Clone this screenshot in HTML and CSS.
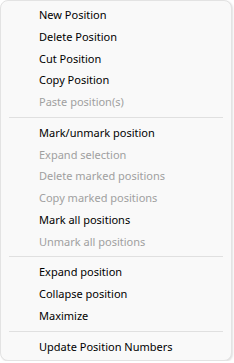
FILE: index.html
```html
<!DOCTYPE html>
<html lang="en">
<head>
    <meta charset="UTF-8">
    <title>Position menu</title>
    <link rel="stylesheet" href="styles.css">
</head>
<body>
    <div class="menu">
        <div class="item">New Position</div>
        <div class="item">Delete Position</div>
        <div class="item">Cut Position</div>
        <div class="item">Copy Position</div>
        <div class="item disabled">Paste position(s)</div>
        <div class="sep"></div>
        <div class="item">Mark/unmark position</div>
        <div class="item disabled">Expand selection</div>
        <div class="item disabled">Delete marked positions</div>
        <div class="item disabled">Copy marked positions</div>
        <div class="item">Mark all positions</div>
        <div class="item disabled">Unmark all positions</div>
        <div class="sep"></div>
        <div class="item">Expand position</div>
        <div class="item">Collapse position</div>
        <div class="item">Maximize</div>
        <div class="sep"></div>
        <div class="item">Update Position Numbers</div>
    </div>
</body>
</html>
```

FILE: styles.css
```css
body {
    margin: 0;
    background: #fff;
    font-family: 'Noto Sans', sans-serif;
    font-size: 11px;
}
.menu {
    box-sizing: border-box;
    width: 232px;
    height: 361px;
    padding-top: 3px;
    background-color: #f9f9f9;
    border: 1px solid #e3e3e3;
    border-radius: 8px;
    box-shadow: 1px 1px 2px rgba(0, 0, 0, 0.12);
}
.item {
    height: 21.75px;
    line-height: 21.75px;
    padding-left: 38px;
    color: #000;
    white-space: nowrap;
}
.item.disabled {
    color: #a0a0a0;
}
.sep {
    height: 1px;
    margin: 4px 8px 4px 8px;
    background-color: #e0e0e0;
}
```
